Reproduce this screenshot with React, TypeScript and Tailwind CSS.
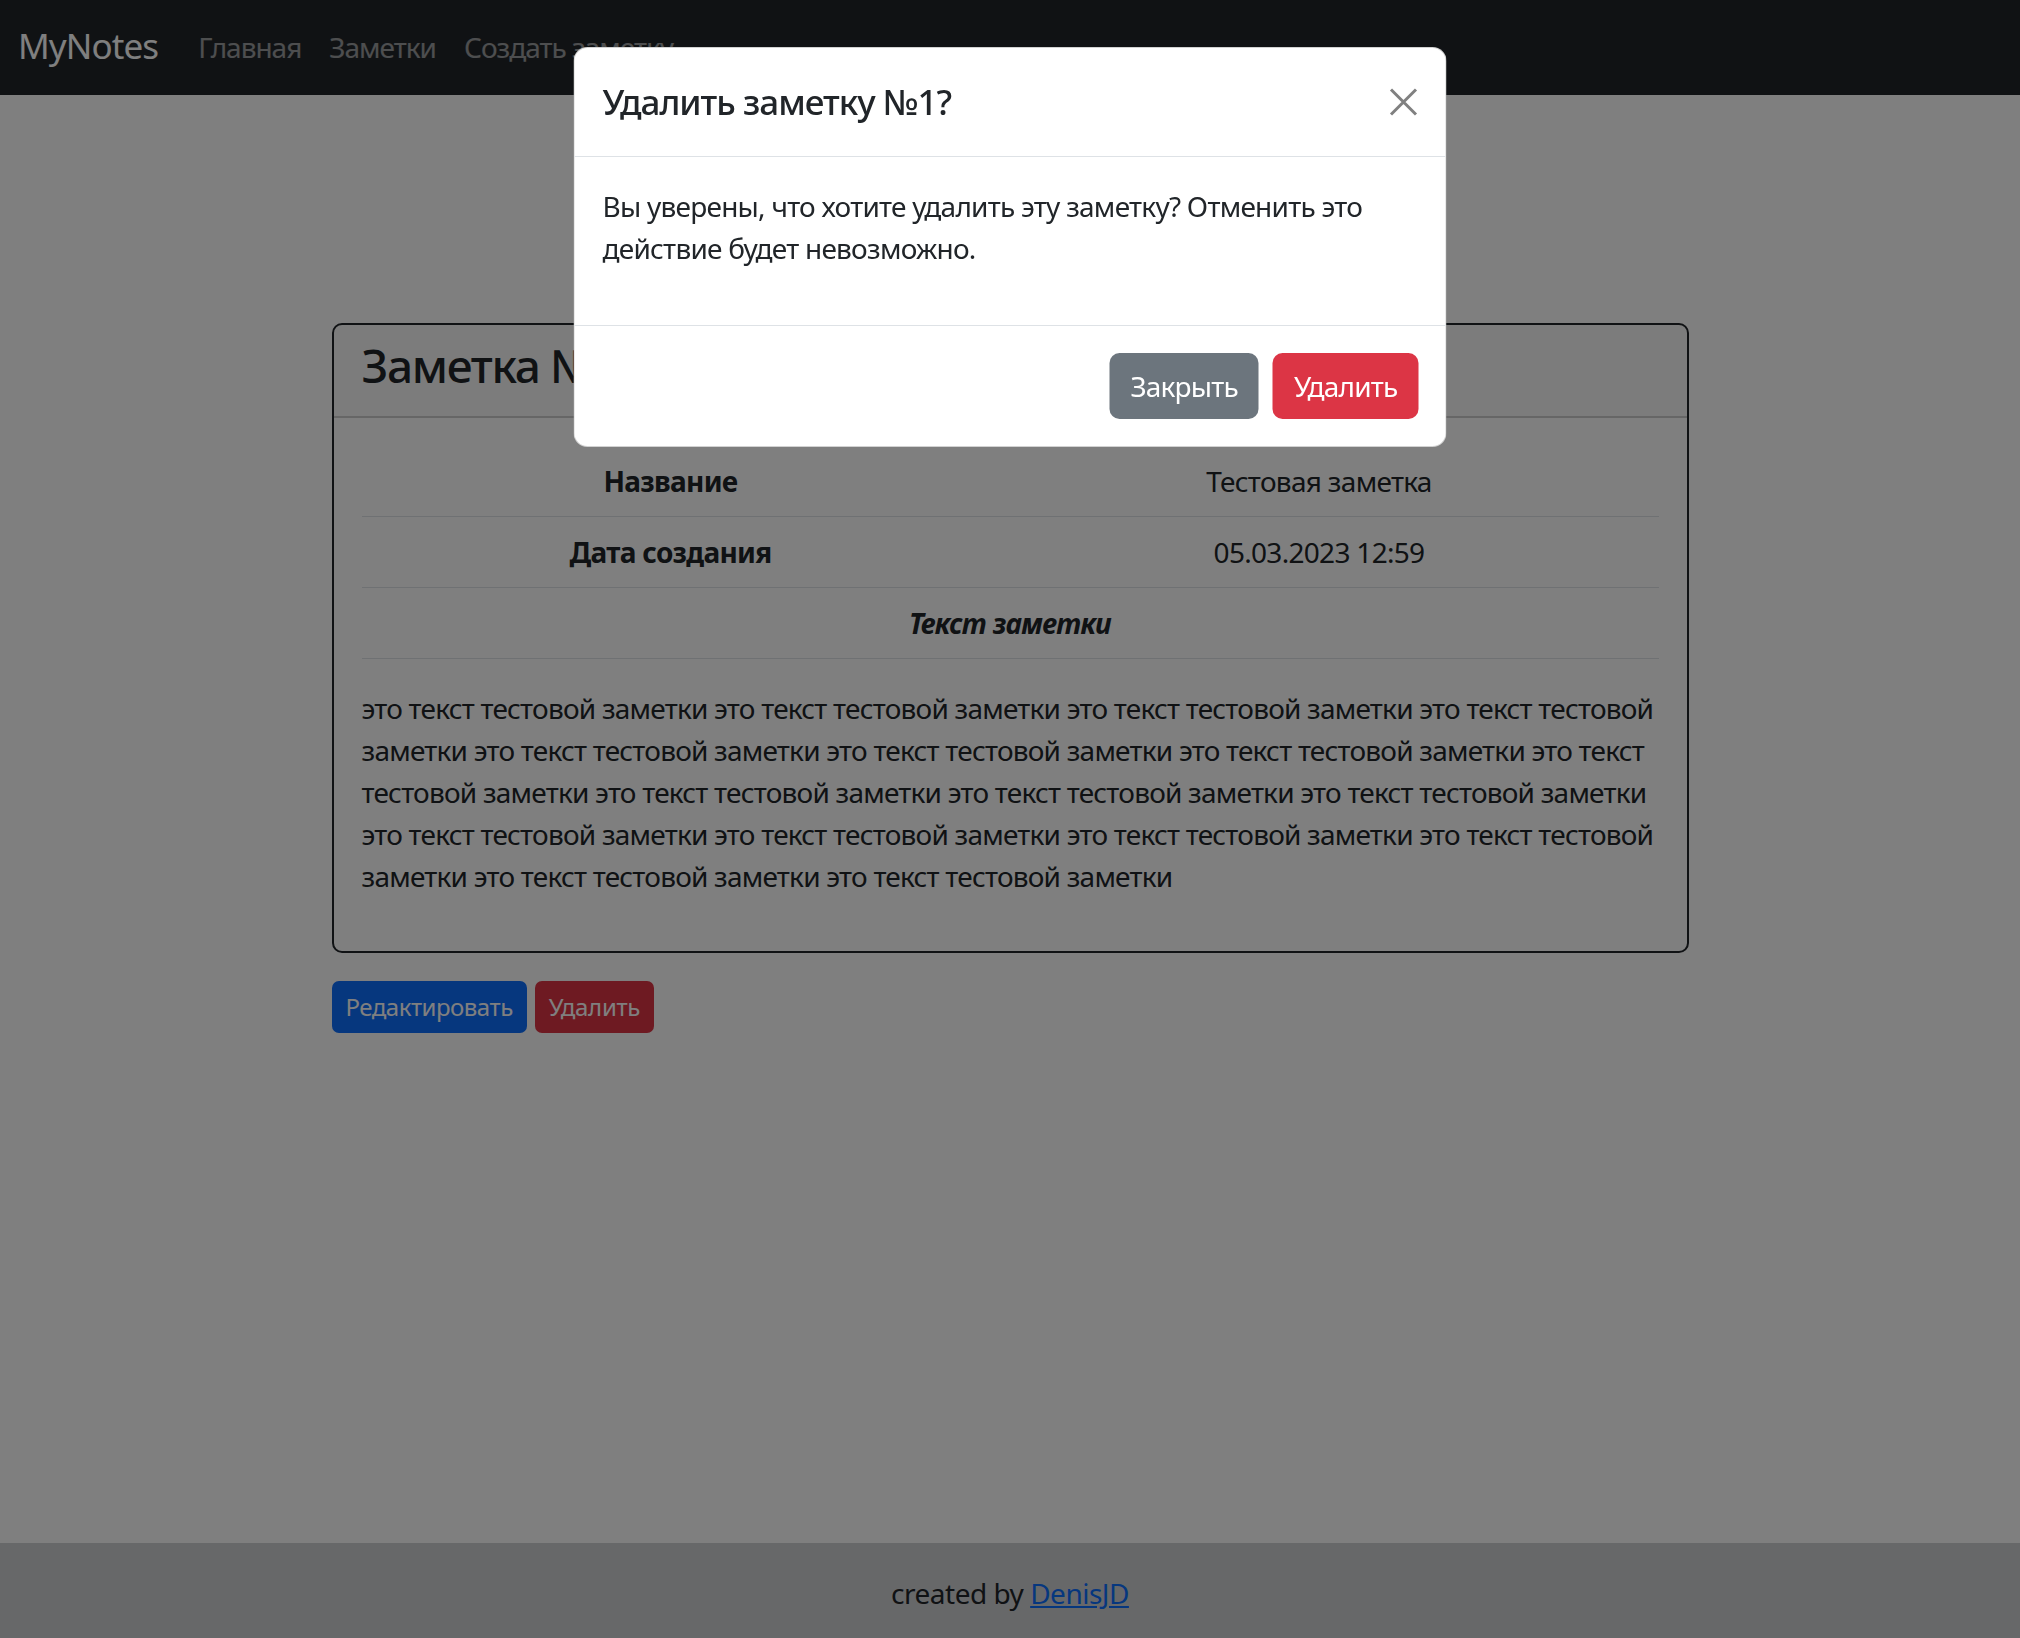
const noteText =
  "это текст тестовой заметки это текст тестовой заметки это текст тестовой заметки это текст тестовой заметки это текст тестовой заметки это текст тестовой заметки это текст тестовой заметки это текст тестовой заметки это текст тестовой заметки это текст тестовой заметки это текст тестовой заметки это текст тестовой заметки это текст тестовой заметки это текст тестовой заметки это текст тестовой заметки это текст тестовой заметки это текст тестовой заметки";

function Navbar() {
  return (
    <nav className="h-[95px] bg-[#212529] flex items-center px-[18px] pb-[2px]">
      <a href="#" className="text-[35px] text-white mr-[26px] leading-[1.5] tracking-[-0.9px]">
        MyNotes
      </a>
      <a href="#" className="px-[14px] text-white/55 tracking-[-1px]">Главная</a>
      <a href="#" className="px-[14px] text-white/55 tracking-[-1px]">Заметки</a>
      <a href="#" className="px-[14px] text-white/55 tracking-[-1px]">Создать заметку</a>
    </nav>
  );
}

function NoteCard() {
  return (
    <section className="w-[1357px] mx-auto mt-[228px] border-2 border-[#212529] rounded-[10px] overflow-hidden">
      <div className="h-[93px] px-[28px] pb-[10px] flex items-center bg-[#212529]/[.03] border-b-2 border-black/[.175]">
        <h3 className="text-[46px] leading-[1.2] font-medium tracking-[-1.3px]">Заметка №1</h3>
      </div>

      <div className="p-[28px]">
        <div className="grid grid-cols-[618px_1fr] text-center">
          <div className="py-[14px] font-bold border-b border-[#dee2e6]">Название</div>
          <div className="py-[14px] border-b border-[#dee2e6]">Тестовая заметка</div>
          <div className="py-[14px] font-bold border-b border-[#dee2e6]">Дата создания</div>
          <div className="py-[14px] border-b border-[#dee2e6]">05.03.2023 12:59</div>
          <div className="col-span-2 py-[14px] font-bold italic border-b border-[#dee2e6]">
            Текст заметки
          </div>
        </div>
        <p className="mt-[28px] mb-[26px] tracking-[-0.78px]">{noteText}</p>
      </div>
    </section>
  );
}

function DeleteModal() {
  return (
    <div className="fixed top-[47px] left-1/2 -translate-x-1/2 w-[873px] bg-white rounded-[14px] border border-black/[.175]">
      <div className="h-[109px] px-[28px] flex items-center justify-between border-b border-[#dee2e6]">
        <h5 className="text-[35px] font-medium tracking-[-1px]">Удалить заметку №1?</h5>
        <button className="text-[#808080]" aria-label="Закрыть">
          <svg width="28" height="28" viewBox="0 0 28 28" fill="none" stroke="currentColor" strokeWidth="3">
            <path d="M1.5 1.5 L26.5 26.5 M26.5 1.5 L1.5 26.5" />
          </svg>
        </button>
      </div>
      <div className="p-[28px]">
        <p className="mb-[28px] tracking-[-0.75px]">
          Вы уверены, что хотите удалить эту заметку? Отменить это действие будет невозможно.
        </p>
      </div>
      <div className="flex justify-end gap-[14px] px-[27px] py-[27px] border-t border-[#dee2e6]">
        <button className="h-[66px] px-[21px] rounded-[10px] bg-[#6c757d] text-white tracking-[-0.8px]">Закрыть</button>
        <button className="h-[66px] px-[21px] rounded-[10px] bg-[#dc3545] text-white tracking-[-0.8px]">Удалить</button>
      </div>
    </div>
  );
}

export default function App() {
  return (
    <div className="relative min-h-[1638px] flex flex-col bg-white text-[#212529] text-[28px] leading-[1.5] tracking-[-0.7px] font-['Noto_Sans',sans-serif]">
      <Navbar />

      <main className="flex-1">
        <NoteCard />
        <div className="w-[1357px] mx-auto mt-[28px] flex gap-[8px]">
          <button className="h-[52px] px-[14px] rounded-[7px] bg-[#0d6efd] text-white text-[24px] tracking-[-0.5px]">
            Редактировать
          </button>
          <button className="h-[52px] px-[14px] rounded-[7px] bg-[#dc3545] text-white text-[24px] tracking-[-0.3px]">
            Удалить
          </button>
        </div>
      </main>

      <footer className="h-[95px] bg-[#cfd0d3] flex items-center justify-center pt-[4px]">
        <span className="tracking-[-0.5px]">
          created by{" "}
          <a href="#" className="text-[#0d6efd] underline">
            DenisJD
          </a>
        </span>
      </footer>

      {/* backdrop + modal */}
      <div className="fixed inset-0 bg-black/50" />
      <DeleteModal />
    </div>
  );
}
